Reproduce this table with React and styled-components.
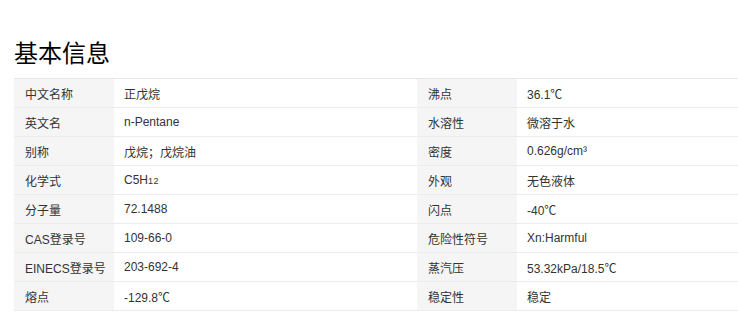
import styled, { createGlobalStyle } from "styled-components";

const GlobalStyle = createGlobalStyle`
  html, body {
    margin: 0;
    padding: 0;
    background: #fff;
    overflow: hidden;
  }
  body {
    font-family: "Liberation Sans", Arial, "Noto Sans CJK SC", sans-serif;
  }
`;

// each row: left label/value, right label/value
const rows = [
  ["中文名称", "正戊烷", "沸点", "36.1℃"],
  ["英文名", "n-Pentane", "水溶性", "微溶于水"],
  ["别称", "戊烷；戊烷油", "密度", "0.626g/cm³"],
  ["化学式", "C5H_12", "外观", "无色液体"],
  ["分子量", "72.1488", "闪点", "-40℃"],
  ["CAS登录号", "109-66-0", "危险性符号", "Xn:Harmful"],
  ["EINECS登录号", "203-692-4", "蒸汽压", "53.32kPa/18.5℃"],
  ["熔点", "-129.8℃", "稳定性", "稳定"],
];

// "C5H_12" -> C5H with a small 12
const renderValue = (text) => {
  if (!text.includes("_")) return text;
  const [main, sub] = text.split("_");
  return (
    <>
      {main}
      <Sub>{sub}</Sub>
    </>
  );
};

const App = () => {
  return (
    <Page>
      <GlobalStyle />
      <Title>基本信息</Title>
      <InfoTable>
        <colgroup>
          <col style={{ width: 100 }} />
          <col style={{ width: 303 }} />
          <col style={{ width: 100 }} />
          <col />
        </colgroup>
        <tbody>
          {rows.map((r, idx) => (
            <Row key={idx}>
              <Label>{r[0]}</Label>
              <Value>{renderValue(r[1])}</Value>
              <Label>{r[2]}</Label>
              <Value>{renderValue(r[3])}</Value>
            </Row>
          ))}
        </tbody>
      </InfoTable>
    </Page>
  );
};

export default App;

const Sub = styled.span`
  font-size: 9px;
  vertical-align: baseline;
  letter-spacing: 0.5px;
`;

const Page = styled.div`
  padding: 40px 0 0 14px;
  width: 738px;
  box-sizing: border-box;
`;

const Title = styled.h2`
  margin: 0 0 14px;
  font-size: 24px;
  line-height: 24px;
  font-weight: normal;
  color: #000;
  font-family: "Noto Sans CJK SC", sans-serif;
`;

const InfoTable = styled.table`
  width: 724px;
  border-collapse: collapse;
  table-layout: fixed;
  border-top: 1px solid #e6e6e6;
  font-size: 12px;
  color: #333;
`;

const Row = styled.tr`
  height: 28px;
  border-bottom: 1px solid #ececec;
`;

const Label = styled.td`
  background: #f5f5f5;
  padding: 0 0 0 11px;
  height: 28px;
  white-space: nowrap;
  vertical-align: middle;
`;

const Value = styled.td`
  padding: 0 0 0 10px;
  height: 28px;
  white-space: nowrap;
  vertical-align: middle;
`;
